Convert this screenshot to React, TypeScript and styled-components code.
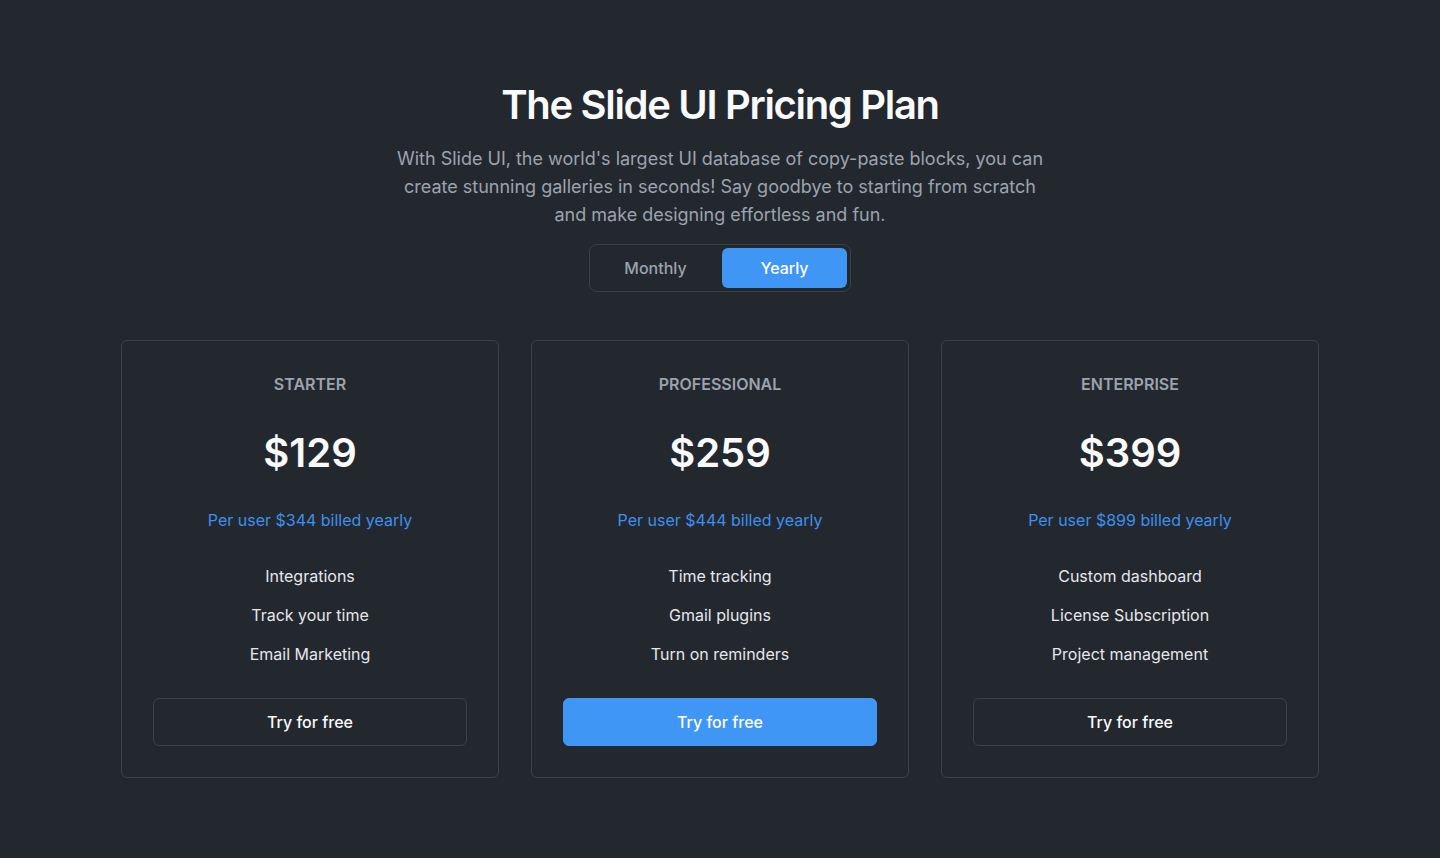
import React, { useState } from "react";
import styled, { createGlobalStyle } from "styled-components";

const colors = {
    bg: "#23282e",
    border: "#3b4149",
    white: "#f9fafb",
    text: "#e5e7eb",
    muted: "#9ca3af",
    blue: "#4096f5",
    blueText: "#3d8ff0",
};

const GlobalStyle = createGlobalStyle`
    html, body {
        margin:0;
        padding:0;
        background:${colors.bg};
        font-family:Inter, "Noto Sans", sans-serif;
        -webkit-font-smoothing:antialiased;
    }
    * { box-sizing:border-box; }
`

interface Plan {
    name: string
    price: string
    billed: string
    features: string[]
    featured?: boolean
}

const plans: Plan[] = [
    { name: "Starter", price: "$129", billed: "Per user $344 billed yearly", features: ["Integrations", "Track your time", "Email Marketing"] },
    { name: "Professional", price: "$259", billed: "Per user $444 billed yearly", features: ["Time tracking", "Gmail plugins", "Turn on reminders"], featured: true },
    { name: "Enterprise", price: "$399", billed: "Per user $899 billed yearly", features: ["Custom dashboard", "License Subscription", "Project management"] },
]

const Page = styled.section`
    min-height:858px;
    padding:81px 0 80px;
    display:flex;
    flex-direction:column;
    align-items:center;
`

const Title = styled.h1`
    margin:0;
    font-size:40px;
    line-height:48px;
    font-weight:600;
    letter-spacing:-0.033em;
    color:${colors.white};
`

const Lead = styled.p`
    margin:16px 0 0;
    max-width:660px;
    font-size:18px;
    line-height:28px;
    color:${colors.muted};
    text-align:center;
`

const Toggle = styled.div`
    margin-top:15px;
    display:flex;
    gap:4px;
    padding:3px;
    border:1px solid ${colors.border};
    border-radius:8px;
`

const ToggleButton = styled.button<{ $active: boolean }>`
    width:125px;
    height:40px;
    border:none;
    border-radius:6px;
    font-family:inherit;
    font-size:16px;
    font-weight:500;
    cursor:pointer;
    background:${p => p.$active ? colors.blue : "transparent"};
    color:${p => p.$active ? "#ffffff" : colors.muted};
`

const Cards = styled.div`
    margin-top:48px;
    display:grid;
    grid-template-columns:repeat(3, 378px);
    gap:32px;
`

const Card = styled.div`
    border:1px solid ${colors.border};
    border-radius:6px;
    padding:31px;
    display:flex;
    flex-direction:column;
    align-items:center;
    text-align:center;
`

const PlanName = styled.h3`
    margin:0;
    font-size:16px;
    line-height:24px;
    font-weight:600;
    text-transform:uppercase;
    color:${colors.muted};
`

const Price = styled.div`
    margin-top:33px;
    font-size:40px;
    line-height:48px;
    font-weight:600;
    color:${colors.white};
`

const Billed = styled.div`
    margin-top:31px;
    font-size:16px;
    line-height:24px;
    color:${colors.blueText};
`

const Features = styled.ul`
    list-style:none;
    margin:32px 0 0;
    padding:0;
    display:flex;
    flex-direction:column;
    gap:15px;
`

const Feature = styled.li`
    font-size:16px;
    line-height:24px;
    color:${colors.text};
`

const TryButton = styled.button<{ $primary?: boolean }>`
    margin-top:32px;
    width:100%;
    height:48px;
    border-radius:6px;
    font-family:inherit;
    font-size:16px;
    font-weight:500;
    cursor:pointer;
    border:1px solid ${p => p.$primary ? colors.blue : colors.border};
    background:${p => p.$primary ? colors.blue : "transparent"};
    color:${p => p.$primary ? "#ffffff" : colors.white};
`

function App() {
    const [yearly, setYearly] = useState(true)
    return (
        <>
            <GlobalStyle />
            <Page>
                <Title>The Slide UI Pricing Plan</Title>
                <Lead>
                    With Slide UI, the world's largest UI database of copy-paste blocks, you can create stunning galleries in seconds! Say goodbye to starting from scratch and make designing effortless and fun.
                </Lead>
                <Toggle>
                    <ToggleButton $active={!yearly} onClick={() => setYearly(false)}>Monthly</ToggleButton>
                    <ToggleButton $active={yearly} onClick={() => setYearly(true)}>Yearly</ToggleButton>
                </Toggle>
                <Cards>
                    {plans.map(plan => (
                        <Card key={plan.name}>
                            <PlanName>{plan.name}</PlanName>
                            <Price>{plan.price}</Price>
                            <Billed>{plan.billed}</Billed>
                            <Features>
                                {plan.features.map(f => <Feature key={f}>{f}</Feature>)}
                            </Features>
                            <TryButton $primary={plan.featured}>Try for free</TryButton>
                        </Card>
                    ))}
                </Cards>
            </Page>
        </>
    )
}

export default App
